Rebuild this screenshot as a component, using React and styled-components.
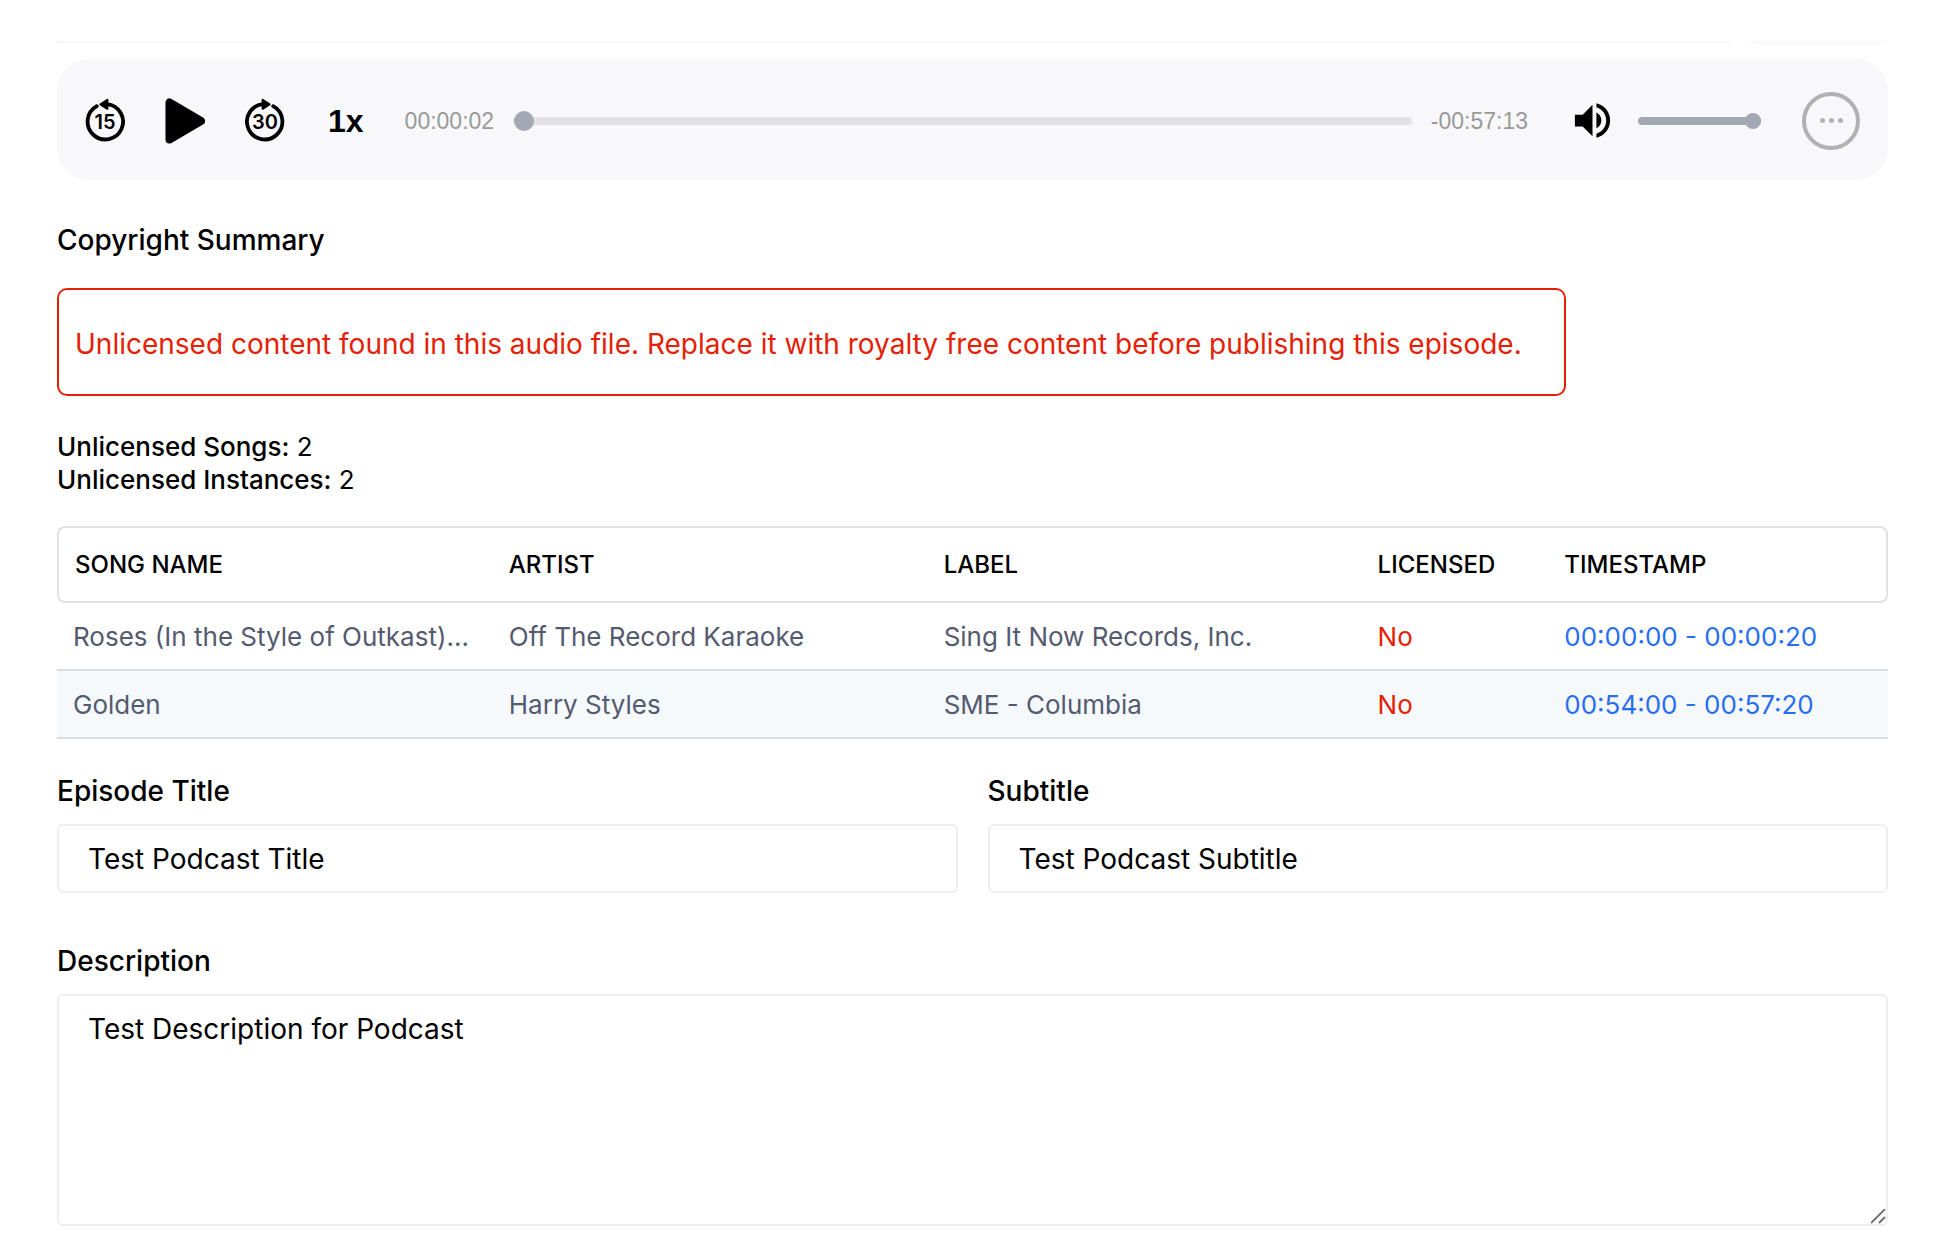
import React, { useState } from "react";
import styled, { createGlobalStyle } from "styled-components";
import { MdVolumeUp } from "react-icons/md";

const GlobalStyle = createGlobalStyle`
  * {
    box-sizing: border-box;
  }

  body {
    margin: 0;
    background: #fff;
    color: #000;
    font-family: Inter, "Liberation Sans", sans-serif;
    font-size: 28px;
  }
`;

const Page = styled.main`
  padding: 41px 46px 34px 57px;
`;

const TopEdge = styled.div`
  display: flex;
  gap: 24px;
  height: 18px;
  overflow: hidden;
`;

const TopLine = styled.div`
  flex: 1;
  height: 2px;
  border-radius: 0 0 4px 4px;
  background: #f5f5f5;
`;

const TopShadow = styled.div`
  width: 130px;
  height: 0;
  margin-right: 4px;
  box-shadow: 0 0 6px 2px rgba(0, 0, 0, 0.06);
`;

const Player = styled.section`
  display: flex;
  align-items: center;
  gap: 41px;
  height: 121px;
  padding: 2px 28px 0 28px;
  border-radius: 32px;
  background: #f8f8fb;
  font-family: "Liberation Sans", Arial, sans-serif;
`;

const Controls = styled.div`
  display: flex;
  align-items: center;
  gap: 40px;
`;

const IconButton = styled.button`
  display: flex;
  padding: 0;
  border: 0;
  background: none;
  color: #000;
  cursor: pointer;

  svg {
    display: block;
  }
`;

const SpeedButton = styled(IconButton)`
  padding-left: 3px;
  font-family: inherit;
  font-size: 32px;
  font-weight: 700;
  line-height: 40px;
`;

const Timeline = styled.div`
  display: flex;
  flex: 1;
  align-items: center;
  gap: 19px;
`;

const Time = styled.span`
  color: #999;
  font-size: 23px;
  line-height: 28px;
`;

const Range = styled.input`
  flex: ${(props) => (props.$width ? "none" : "1")};
  width: ${(props) => props.$width || "100%"};
  min-width: 0;
  height: 22px;
  margin: 0;
  appearance: none;
  background: none;
  cursor: pointer;

  &::-webkit-slider-runnable-track {
    height: 8px;
    border-radius: 4px;
    background: ${(props) => props.$track};
  }

  &::-webkit-slider-thumb {
    appearance: none;
    width: ${(props) => props.$thumb}px;
    height: ${(props) => props.$thumb}px;
    margin-top: ${(props) => (8 - props.$thumb) / 2}px;
    border-radius: 50%;
    background: #a3a9b3;
  }
`;

const Volume = styled.div`
  display: flex;
  align-items: center;
  gap: 22px;
`;

const MoreButton = styled.button`
  display: flex;
  align-items: center;
  justify-content: center;
  gap: 4px;
  width: 58px;
  height: 58px;
  padding: 0;
  border: 4px solid #b1b1b1;
  border-radius: 50%;
  background: none;
  cursor: pointer;
`;

const Dot = styled.span`
  width: 5px;
  height: 5px;
  border-radius: 50%;
  background: #b1b1b1;
`;

const Heading = styled.h2`
  margin: 43px 0 31px;
  font-size: 28px;
  font-weight: 500;
  line-height: 34px;
`;

const Alert = styled.div`
  max-width: 1509px;
  padding: 37px 16px 33px;
  border: 2px solid #e62005;
  border-radius: 10px;
  color: #e62005;
  line-height: 34px;
`;

const Counts = styled.div`
  margin: 34px 0 30px;
  font-size: 26px;
  line-height: 33px;
`;

const CountLabel = styled.span`
  font-weight: 500;
`;

const Table = styled.table`
  width: 100%;
  border-spacing: 0;
  table-layout: fixed;
  text-align: left;
`;

const Col = styled.col`
  width: ${(props) => props.$width};
`;

const Th = styled.th`
  height: 77px;
  padding: 0 16px;
  border: solid #e2e2e2;
  border-width: 2px 0;
  font-size: 24px;
  font-weight: 500;

  &:first-child {
    border-left-width: 2px;
    border-radius: 8px 0 0 8px;
  }

  &:last-child {
    border-right-width: 2px;
    border-radius: 0 8px 8px 0;
  }
`;

const Row = styled.tr`
  &:nth-child(even) {
    background: #f5f9fc;
  }
`;

const Td = styled.td`
  height: 68px;
  padding: 0 16px;
  border-bottom: 2px solid #d8dcdc;
  color: ${(props) => props.$color || "#545a70"};
  font-size: 26px;
  white-space: nowrap;
`;

const TimeLink = styled.a`
  color: #276ef1;
  text-decoration: none;
`;

const Fields = styled.form`
  display: grid;
  grid-template-columns: 1fr 1fr;
  gap: 51px 30px;
  margin-top: 35px;
`;

const Field = styled.div`
  display: flex;
  flex-direction: column;
  gap: 16px;
  grid-column: ${(props) => (props.$wide ? "1 / -1" : "auto")};
`;

const Label = styled.label`
  font-weight: 500;
  line-height: 34px;
`;

const Input = styled.input`
  width: 100%;
  height: 69px;
  padding: 0 29px;
  border: 2px solid #eee;
  border-radius: 6px;
  background: #fff;
  color: #000;
  font: inherit;
`;

const grip = encodeURIComponent(
  `<svg xmlns="http://www.w3.org/2000/svg" width="15" height="15"><path d="M0 14 14 0M8 14 14 8" stroke="#6b6b6b" stroke-width="1.8"/></svg>`
);

const TextArea = styled.textarea`
  width: 100%;
  height: 232px;
  padding: 16px 29px;
  border: 2px solid #eee;
  border-radius: 6px;
  background: #fff;
  color: #000;
  font: inherit;
  line-height: 34px;
  resize: vertical;

  &::-webkit-resizer {
    background: url("data:image/svg+xml,${grip}") no-repeat;
  }
`;

const songs = [
  {
    name: "Roses (In the Style of Outkast)...",
    artist: "Off The Record Karaoke",
    label: "Sing It Now Records, Inc.",
    licensed: "No",
    timestamp: "00:00:00 - 00:00:20",
  },
  {
    name: "Golden",
    artist: "Harry Styles",
    label: "SME - Columbia",
    licensed: "No",
    timestamp: "00:54:00 - 00:57:20",
  },
];

const SkipIcon = ({ seconds, forward }) => (
  <svg width="40" height="46" viewBox="0 0 40 46">
    <g transform={forward ? "matrix(-1 0 0 1 40 0)" : undefined}>
      <path
        d="M22 6.1A17.7 17.7 0 1 1 11.8 8.2"
        fill="none"
        stroke="#000"
        strokeWidth="3.8"
        strokeLinecap="round"
      />
      <path
        d="M15.4 6.3 22.4 1.9V10.8Z"
        stroke="#000"
        strokeWidth="2"
        strokeLinejoin="round"
      />
    </g>
    <text
      x="20"
      y="30.5"
      textAnchor="middle"
      fontFamily="Inter, sans-serif"
      fontSize="20"
      fontWeight="600"
    >
      {seconds}
    </text>
  </svg>
);

const PlayIcon = () => (
  <svg width="40" height="46" viewBox="0 0 40 46">
    <path
      d="M4.5 4.5V41.5L36 23Z"
      stroke="#000"
      strokeWidth="8"
      strokeLinejoin="round"
    />
  </svg>
);

const AudioPlayer = () => {
  const [position, setPosition] = useState(2);
  const [volume, setVolume] = useState(100);

  return (
    <Player>
      <Controls>
        <IconButton aria-label="Back 15 seconds">
          <SkipIcon seconds={15} />
        </IconButton>
        <IconButton aria-label="Play">
          <PlayIcon />
        </IconButton>
        <IconButton aria-label="Forward 30 seconds">
          <SkipIcon seconds={30} forward />
        </IconButton>
        <SpeedButton>1x</SpeedButton>
      </Controls>
      <Timeline>
        <Time>00:00:02</Time>
        <Range
          type="range"
          aria-label="Position"
          min="0"
          max="3435"
          value={position}
          onChange={(e) => setPosition(e.target.value)}
          $track="#e2e2e7"
          $thumb={20}
        />
        <Time>-00:57:13</Time>
      </Timeline>
      <Volume>
        <IconButton aria-label="Mute">
          <MdVolumeUp size={47} />
        </IconButton>
        <Range
          type="range"
          aria-label="Volume"
          value={volume}
          onChange={(e) => setVolume(e.target.value)}
          $width="123px"
          $track="#a3a9b3"
          $thumb={16}
        />
      </Volume>
      <MoreButton aria-label="More options">
        <Dot />
        <Dot />
        <Dot />
      </MoreButton>
    </Player>
  );
};

const SongTable = () => (
  <Table>
    <colgroup>
      <Col $width="23.8%" />
      <Col $width="23.75%" />
      <Col $width="23.7%" />
      <Col $width="10.2%" />
      <Col />
    </colgroup>
    <thead>
      <tr>
        <Th>SONG NAME</Th>
        <Th>ARTIST</Th>
        <Th>LABEL</Th>
        <Th>LICENSED</Th>
        <Th>TIMESTAMP</Th>
      </tr>
    </thead>
    <tbody>
      {songs.map((song) => (
        <Row key={song.name}>
          <Td>{song.name}</Td>
          <Td>{song.artist}</Td>
          <Td>{song.label}</Td>
          <Td $color="#e62005">{song.licensed}</Td>
          <Td>
            <TimeLink href="#">{song.timestamp}</TimeLink>
          </Td>
        </Row>
      ))}
    </tbody>
  </Table>
);

const App = () => {
  return (
    <>
      <GlobalStyle />
      <Page>
        <TopEdge>
          <TopLine />
          <TopShadow />
        </TopEdge>
        <AudioPlayer />
        <Heading>Copyright Summary</Heading>
        <Alert>
          Unlicensed content found in this audio file. Replace it with royalty
          free content before publishing this episode.
        </Alert>
        <Counts>
          <div>
            <CountLabel>Unlicensed Songs:</CountLabel> 2
          </div>
          <div>
            <CountLabel>Unlicensed Instances:</CountLabel> 2
          </div>
        </Counts>
        <SongTable />
        <Fields>
          <Field>
            <Label htmlFor="title">Episode Title</Label>
            <Input id="title" defaultValue="Test Podcast Title" />
          </Field>
          <Field>
            <Label htmlFor="subtitle">Subtitle</Label>
            <Input id="subtitle" defaultValue="Test Podcast Subtitle" />
          </Field>
          <Field $wide>
            <Label htmlFor="description">Description</Label>
            <TextArea
              id="description"
              defaultValue="Test Description for Podcast"
            />
          </Field>
        </Fields>
      </Page>
    </>
  );
};

export default App;
